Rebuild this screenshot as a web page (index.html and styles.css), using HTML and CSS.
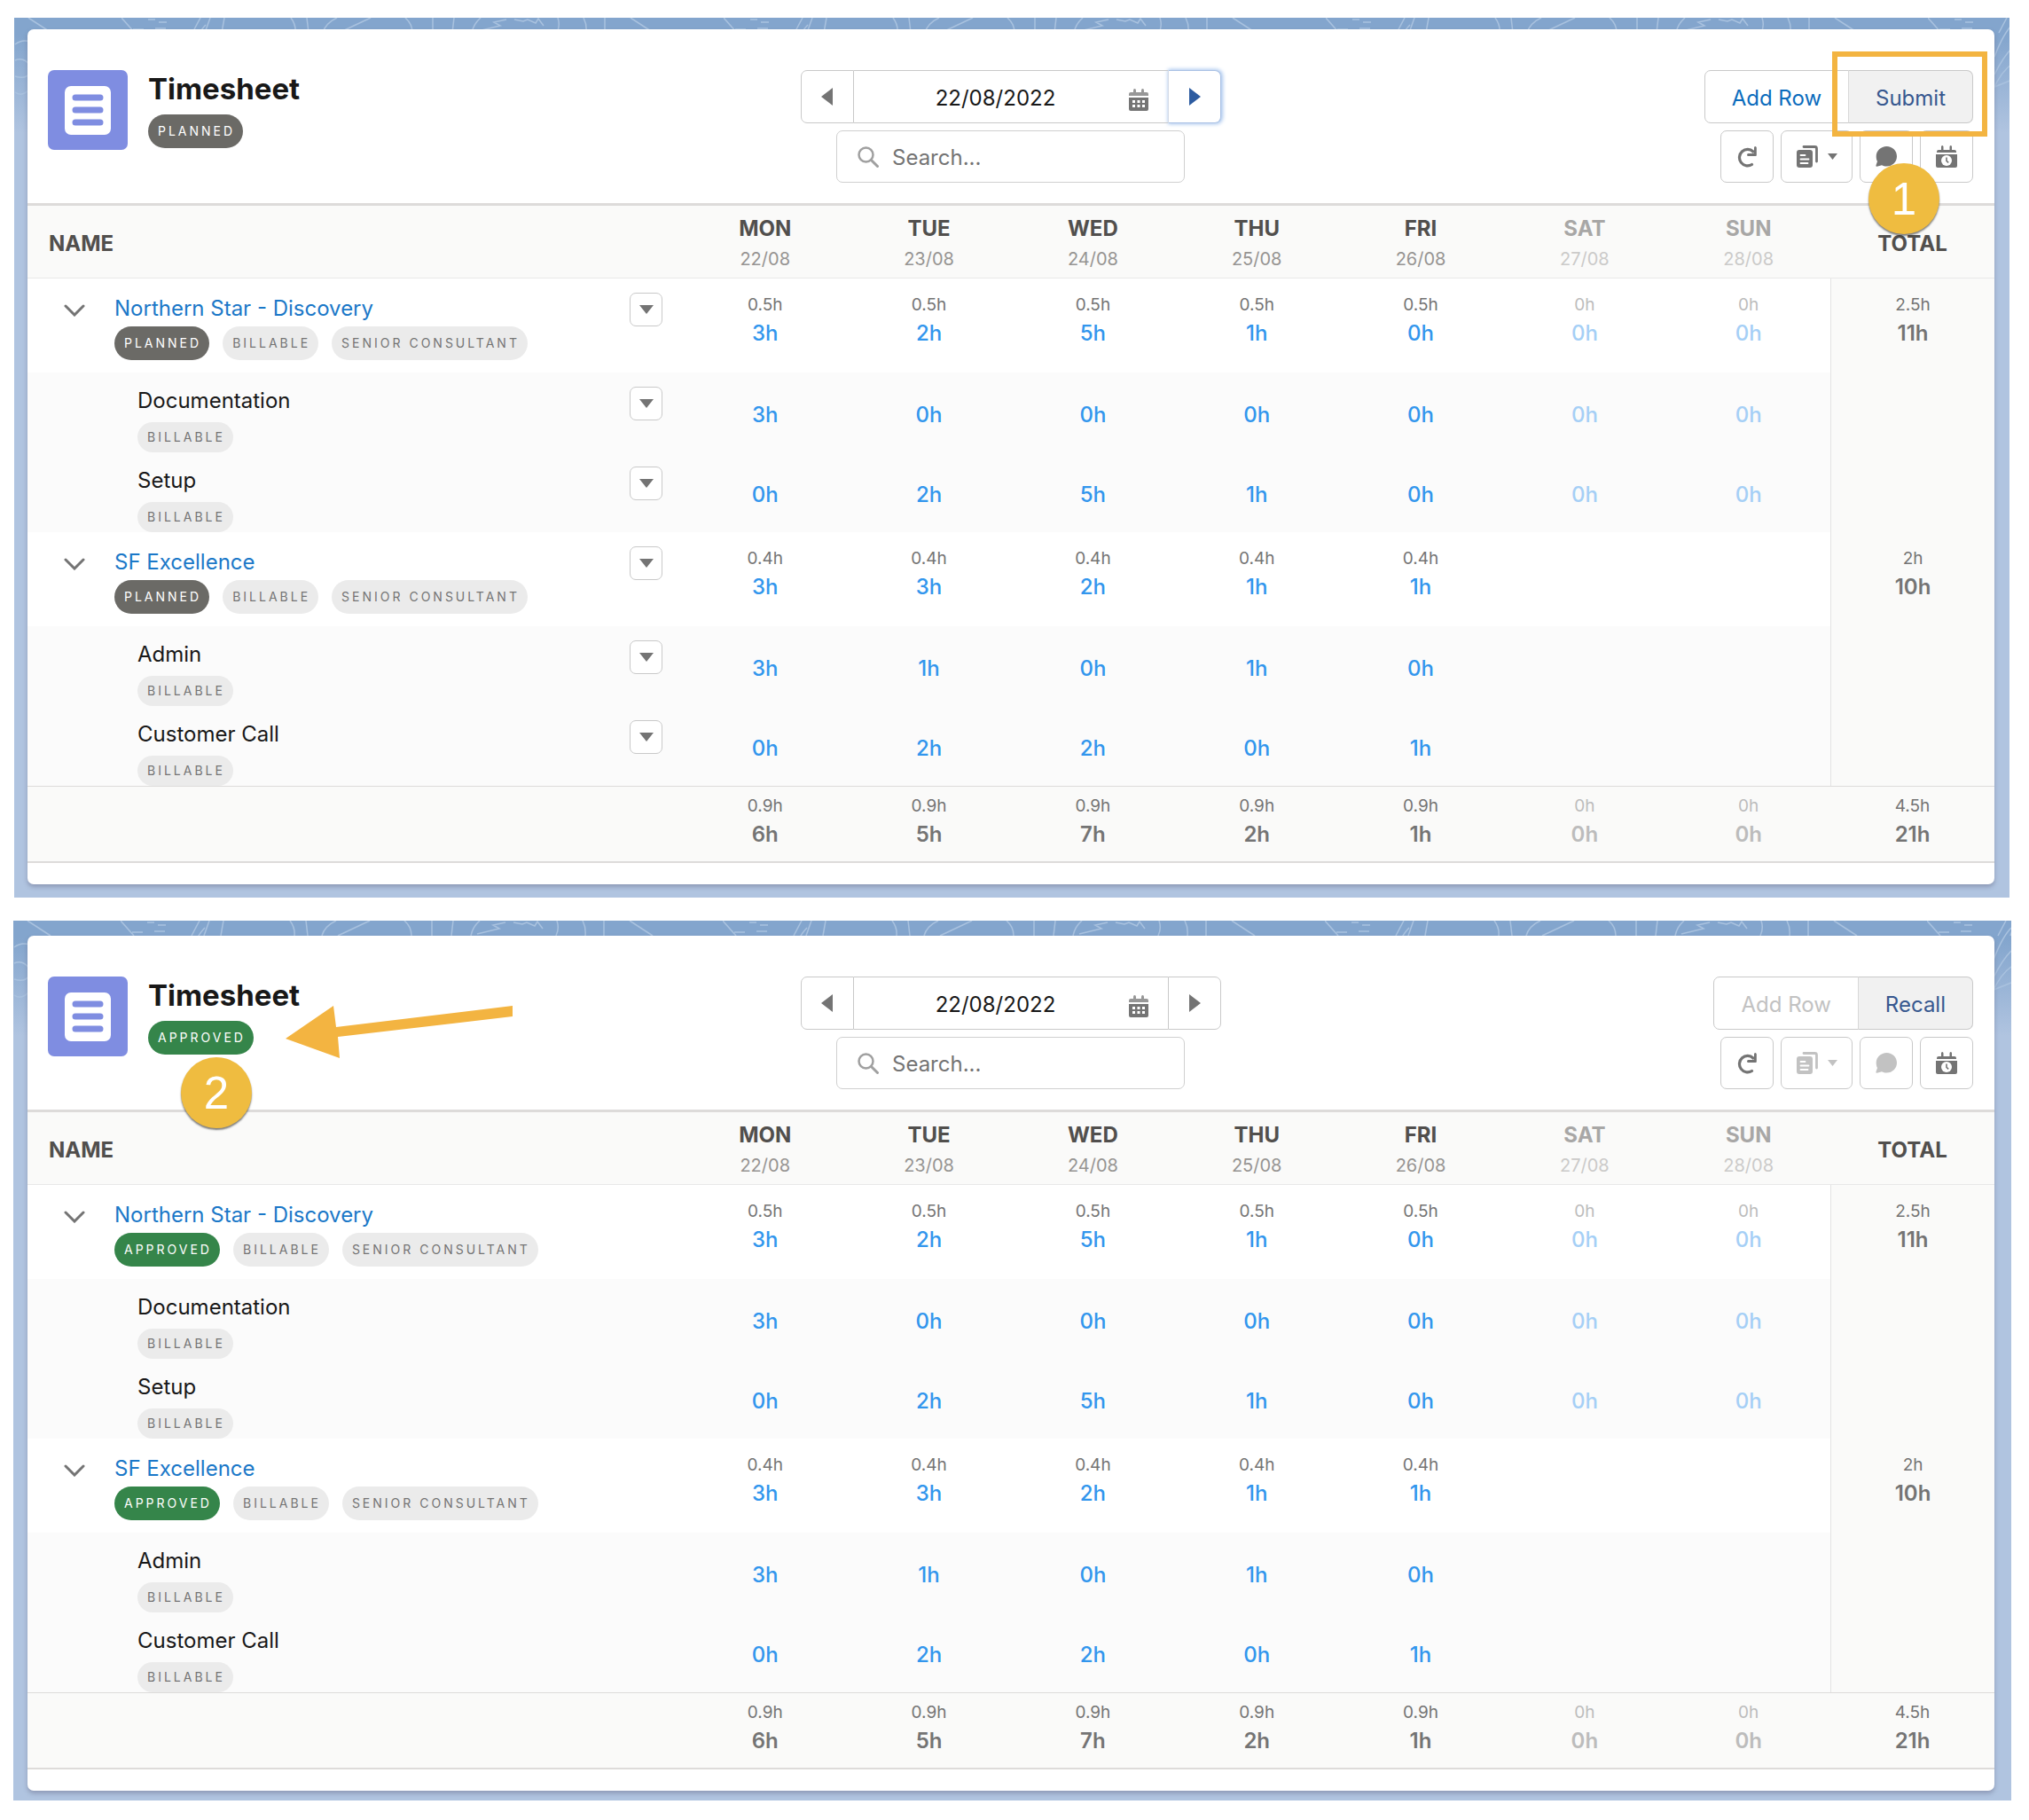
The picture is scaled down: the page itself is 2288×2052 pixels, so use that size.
FILE: index.html
```html
<!DOCTYPE html>
<html lang="en">
<head>
    <meta charset="UTF-8">
    <meta name="viewport" content="width=device-width, initial-scale=1.0">
    <title>Timesheet</title>
    <link rel="stylesheet" href="styles.css">
</head>
<body>

    <!-- shared icons -->
    <svg class="sprite" aria-hidden="true">
        <symbol id="i-sheet" viewBox="0 0 90 90">
            <rect x="19" y="18" width="52" height="55" rx="7" fill="#fff"/>
            <path d="M31 31h28M31 45h28M31 59h28" stroke="#7f8de1" stroke-width="7" stroke-linecap="round"/>
        </symbol>
        <symbol id="i-left" viewBox="0 0 14 20"><path d="M13 0v20L0 10z" fill="currentColor"/></symbol>
        <symbol id="i-right" viewBox="0 0 14 20"><path d="M1 0v20l13-10z" fill="currentColor"/></symbol>
        <symbol id="i-down" viewBox="0 0 16 10"><path d="M0 0h16L8 10z" fill="currentColor"/></symbol>
        <symbol id="i-chevron" viewBox="0 0 24 14"><path d="M2 2l10 10L22 2" fill="none" stroke="currentColor" stroke-width="3" stroke-linecap="round"/></symbol>
        <symbol id="i-calendar" viewBox="0 0 22 25">
            <path d="M0 8V6q0-2 2-2h3V2q0-2 1.500-2T8 2v2h6V2q0-2 1.500-2T17 2v2h3q2 0 2 2v2z" fill="currentColor" opacity=".75"/>
            <path d="M0 10h22v13q0 2-2 2H2q-2 0-2-2z" fill="currentColor"/>
            <path d="M4 13h3v3H4zm5.500 0h3v3h-3zm5.500 0h3v3h-3zM4 18h3v3H4zm5.500 0h3v3h-3zm5.500 0h3v3h-3z" fill="#fff"/>
        </symbol>
        <symbol id="i-search" viewBox="0 0 24 24"><circle cx="9.500" cy="9.500" r="8" fill="none" stroke="currentColor" stroke-width="2.500"/><path d="M15.500 15.500l7 7" stroke="currentColor" stroke-width="3" stroke-linecap="round"/></symbol>
        <symbol id="i-refresh" viewBox="0 0 24 24">
            <path d="M17.500 20.500A9.200 9.200 0 1 1 19 6" fill="none" stroke="currentColor" stroke-width="3.200" stroke-linecap="round"/>
            <path d="M20 1.500q0-1.500 1.300-1.500T22.800 1.500V10q0 1-1 1h-8.300q-1.500 0-1.500-1.500T13.500 8H20z" fill="currentColor"/>
        </symbol>
        <symbol id="i-copy" viewBox="0 0 24 25">
            <path d="M8 1.500h12.500q2 0 2 2V18" fill="none" stroke="currentColor" stroke-width="2.800" stroke-linecap="round"/>
            <rect x="0" y="5" width="18" height="20" rx="3" fill="currentColor"/>
            <path d="M4.500 11h5M4.500 15.500h9M4.500 20h8" stroke="#fff" stroke-width="1.800" stroke-linecap="round"/>
        </symbol>
        <symbol id="i-chat" viewBox="0 0 24 23"><path d="M12.500 0C19 0 24 5 24 11.200S19 22.500 12.500 22.500c-2 0-4-.5-5.500-1.300l-5.500 1.600q-1.500 0-1-1.500L2 17C1 15.200.7 13.300.7 11.200.7 5 6 0 12.500 0z" fill="currentColor"/></symbol>
        <symbol id="i-event" viewBox="0 0 24 25">
            <path d="M1 8V7q0-2 2-2h3V1.500Q6 0 7.200 0T8.500 1.500V5h7V1.500Q15.500 0 16.800 0T18 1.500V5h3q2 0 2 2v1z" fill="currentColor"/>
            <path d="M0 10h24V23q0 2-2 2H2q-2 0-2-2z" fill="currentColor"/>
            <circle cx="12" cy="17" r="6" fill="#fff"/>
            <path d="M12 13.500v3.800l2.200 2" fill="none" stroke="currentColor" stroke-width="1.600"/>
        </symbol>
        <!-- contour lines of the backdrop -->
        <pattern id="contours" x="121" y="0" width="679" height="130" patternUnits="userSpaceOnUse">
            <g fill="none" stroke="#a9c2df" stroke-width="1.500">
                <path d="M0 0l15 17M13 13h12M30 2h8M42 5h9M38 12h12M89 0l-9 17M100 0l-6 17M116 0l-3 17"/>
                <path d="M191 0q6 8 5 17M209 0l2 17M243 0q-13 6-16 17M281 0l-36 17"/>
                <path d="M320 0q8 7 8 17M351 0v17M375 0l-2 17M405 0q-8 7-10 17M434 2l-14 3 7 4-25 6"/>
                <path d="M443 2l10 2 5-2 9 4 3-5 6 8M492 0q3 9-1 17M521 0q4 8 3 17M545 0v17M574 0l26 17"/>
                <path d="M95 8q-10 10-20 36M95 34q-10 10-20 30M95 52q-12 8-22 30M95 70q-10 4-20 8"/>
                <path d="M559 30q8-6 17-3M559 48q10-4 17 6M559 66q12 4 17-4M559 84q8 6 17-4"/>
            </g>
        </pattern>
    </svg>

    <section class="panel planned">
        <svg class="backdrop" aria-hidden="true"><rect y="-4" width="100%" height="130" fill="url(#contours)"/></svg>
        <div class="card">
            <header class="card-header">
                <div class="title">
                    <svg class="title-icon"><use href="#i-sheet"/></svg>
                    <div>
                        <h1>Timesheet</h1>
                        <span class="pill status">Planned</span>
                    </div>
                </div>
                <div class="filters">
                    <div class="date-bar">
                        <button class="step" aria-label="Previous week"><svg width="14" height="20"><use href="#i-left"/></svg></button>
                        <label class="date">
                            <input type="text" value="22/08/2022" aria-label="Week">
                            <svg width="22" height="25"><use href="#i-calendar"/></svg>
                        </label>
                        <button class="step focused" aria-label="Next week"><svg width="14" height="20"><use href="#i-right"/></svg></button>
                    </div>
                    <label class="search">
                        <svg width="24" height="24"><use href="#i-search"/></svg>
                        <input type="search" placeholder="Search..." aria-label="Search">
                    </label>
                </div>
                <div class="actions">
                    <div class="button-group">
                        <button class="btn">Add Row</button>
                        <button class="btn main">Submit</button>
                        <span class="highlight"></span>
                    </div>
                    <div class="tools">
                        <button class="tool" aria-label="Refresh"><svg width="24" height="24"><use href="#i-refresh"/></svg></button>
                        <button class="tool wide" aria-label="Copy"><svg width="24" height="25"><use href="#i-copy"/></svg><svg width="11" height="7"><use href="#i-down"/></svg></button>
                        <button class="tool" aria-label="Comments"><svg width="24" height="23"><use href="#i-chat"/></svg></button>
                        <button class="tool" aria-label="Schedule"><svg width="24" height="25"><use href="#i-event"/></svg></button>
                    </div>
                    <span class="badge badge-one">1</span>
                </div>
            </header>

            <table class="sheet">
                <thead>
                    <tr>
                        <th class="name">Name</th>
                        <th>Mon<span>22/08</span></th><th>Tue<span>23/08</span></th><th>Wed<span>24/08</span></th><th>Thu<span>25/08</span></th><th>Fri<span>26/08</span></th>
                        <th class="off">Sat<span>27/08</span></th><th class="off">Sun<span>28/08</span></th>
                        <th class="total">Total</th>
                    </tr>
                </thead>
                <tbody>
                    <tr class="project">
                        <td class="name"><div class="row-head">
                            <button class="toggle" aria-label="Collapse"><svg width="24" height="14"><use href="#i-chevron"/></svg></button>
                            <div class="label"><a href="#">Northern Star - Discovery</a>
                                <div class="pills"><span class="pill status">Planned</span><span class="pill">Billable</span><span class="pill">Senior Consultant</span></div></div>
                            <button class="menu" aria-label="Row actions"><svg width="16" height="10"><use href="#i-down"/></svg></button>
                        </div></td>
                        <td><small>0.5h</small><a href="#">3h</a></td><td><small>0.5h</small><a href="#">2h</a></td><td><small>0.5h</small><a href="#">5h</a></td><td><small>0.5h</small><a href="#">1h</a></td><td><small>0.5h</small><a href="#">0h</a></td>
                        <td class="off"><small>0h</small><a href="#">0h</a></td><td class="off"><small>0h</small><a href="#">0h</a></td>
                        <td class="total"><small>2.5h</small><b>11h</b></td>
                    </tr>
                    <tr class="task">
                        <td class="name"><div class="row-head">
                            <div class="label">Documentation<div class="pills"><span class="pill">Billable</span></div></div>
                            <button class="menu" aria-label="Row actions"><svg width="16" height="10"><use href="#i-down"/></svg></button>
                        </div></td>
                        <td><a href="#">3h</a></td><td><a href="#">0h</a></td><td><a href="#">0h</a></td><td><a href="#">0h</a></td><td><a href="#">0h</a></td>
                        <td class="off"><a href="#">0h</a></td><td class="off"><a href="#">0h</a></td>
                        <td class="total"></td>
                    </tr>
                    <tr class="task">
                        <td class="name"><div class="row-head">
                            <div class="label">Setup<div class="pills"><span class="pill">Billable</span></div></div>
                            <button class="menu" aria-label="Row actions"><svg width="16" height="10"><use href="#i-down"/></svg></button>
                        </div></td>
                        <td><a href="#">0h</a></td><td><a href="#">2h</a></td><td><a href="#">5h</a></td><td><a href="#">1h</a></td><td><a href="#">0h</a></td>
                        <td class="off"><a href="#">0h</a></td><td class="off"><a href="#">0h</a></td>
                        <td class="total"></td>
                    </tr>
                    <tr class="project">
                        <td class="name"><div class="row-head">
                            <button class="toggle" aria-label="Collapse"><svg width="24" height="14"><use href="#i-chevron"/></svg></button>
                            <div class="label"><a href="#">SF Excellence</a>
                                <div class="pills"><span class="pill status">Planned</span><span class="pill">Billable</span><span class="pill">Senior Consultant</span></div></div>
                            <button class="menu" aria-label="Row actions"><svg width="16" height="10"><use href="#i-down"/></svg></button>
                        </div></td>
                        <td><small>0.4h</small><a href="#">3h</a></td><td><small>0.4h</small><a href="#">3h</a></td><td><small>0.4h</small><a href="#">2h</a></td><td><small>0.4h</small><a href="#">1h</a></td><td><small>0.4h</small><a href="#">1h</a></td>
                        <td></td><td></td>
                        <td class="total"><small>2h</small><b>10h</b></td>
                    </tr>
                    <tr class="task">
                        <td class="name"><div class="row-head">
                            <div class="label">Admin<div class="pills"><span class="pill">Billable</span></div></div>
                            <button class="menu" aria-label="Row actions"><svg width="16" height="10"><use href="#i-down"/></svg></button>
                        </div></td>
                        <td><a href="#">3h</a></td><td><a href="#">1h</a></td><td><a href="#">0h</a></td><td><a href="#">1h</a></td><td><a href="#">0h</a></td>
                        <td></td><td></td>
                        <td class="total"></td>
                    </tr>
                    <tr class="task">
                        <td class="name"><div class="row-head">
                            <div class="label">Customer Call<div class="pills"><span class="pill">Billable</span></div></div>
                            <button class="menu" aria-label="Row actions"><svg width="16" height="10"><use href="#i-down"/></svg></button>
                        </div></td>
                        <td><a href="#">0h</a></td><td><a href="#">2h</a></td><td><a href="#">2h</a></td><td><a href="#">0h</a></td><td><a href="#">1h</a></td>
                        <td></td><td></td>
                        <td class="total"></td>
                    </tr>
                </tbody>
                <tfoot>
                    <tr>
                        <td class="name"></td>
                        <td><small>0.9h</small><b>6h</b></td><td><small>0.9h</small><b>5h</b></td><td><small>0.9h</small><b>7h</b></td><td><small>0.9h</small><b>2h</b></td><td><small>0.9h</small><b>1h</b></td>
                        <td class="off"><small>0h</small><b>0h</b></td><td class="off"><small>0h</small><b>0h</b></td>
                        <td><small>4.5h</small><b>21h</b></td>
                    </tr>
                </tfoot>
            </table>
        </div>
    </section>

    <section class="panel approved">
        <svg class="backdrop" aria-hidden="true"><rect width="100%" height="130" fill="url(#contours)"/></svg>
        <div class="card">
            <header class="card-header">
                <div class="title">
                    <svg class="title-icon"><use href="#i-sheet"/></svg>
                    <div>
                        <h1>Timesheet</h1>
                        <span class="pill status">Approved</span>
                    </div>
                    <svg class="arrow" width="260" height="64" aria-hidden="true"><path d="M0 39L54 2l3 24L256 2v12L59 37l2 24z" fill="#f3b441"/></svg>
                    <span class="badge badge-two">2</span>
                </div>
                <div class="filters">
                    <div class="date-bar">
                        <button class="step" aria-label="Previous week"><svg width="14" height="20"><use href="#i-left"/></svg></button>
                        <label class="date">
                            <input type="text" value="22/08/2022" aria-label="Week">
                            <svg width="22" height="25"><use href="#i-calendar"/></svg>
                        </label>
                        <button class="step" aria-label="Next week"><svg width="14" height="20"><use href="#i-right"/></svg></button>
                    </div>
                    <label class="search">
                        <svg width="24" height="24"><use href="#i-search"/></svg>
                        <input type="search" placeholder="Search..." aria-label="Search">
                    </label>
                </div>
                <div class="actions">
                    <div class="button-group">
                        <button class="btn" disabled>Add Row</button>
                        <button class="btn main">Recall</button>
                    </div>
                    <div class="tools">
                        <button class="tool" aria-label="Refresh"><svg width="24" height="24"><use href="#i-refresh"/></svg></button>
                        <button class="tool wide" aria-label="Copy" disabled><svg width="24" height="25"><use href="#i-copy"/></svg><svg width="11" height="7"><use href="#i-down"/></svg></button>
                        <button class="tool" aria-label="Comments" disabled><svg width="24" height="23"><use href="#i-chat"/></svg></button>
                        <button class="tool" aria-label="Schedule"><svg width="24" height="25"><use href="#i-event"/></svg></button>
                    </div>
                </div>
            </header>

            <table class="sheet">
                <thead>
                    <tr>
                        <th class="name">Name</th>
                        <th>Mon<span>22/08</span></th><th>Tue<span>23/08</span></th><th>Wed<span>24/08</span></th><th>Thu<span>25/08</span></th><th>Fri<span>26/08</span></th>
                        <th class="off">Sat<span>27/08</span></th><th class="off">Sun<span>28/08</span></th>
                        <th class="total">Total</th>
                    </tr>
                </thead>
                <tbody>
                    <tr class="project">
                        <td class="name"><div class="row-head">
                            <button class="toggle" aria-label="Collapse"><svg width="24" height="14"><use href="#i-chevron"/></svg></button>
                            <div class="label"><a href="#">Northern Star - Discovery</a>
                                <div class="pills"><span class="pill status">Approved</span><span class="pill">Billable</span><span class="pill">Senior Consultant</span></div></div>
                        </div></td>
                        <td><small>0.5h</small><a href="#">3h</a></td><td><small>0.5h</small><a href="#">2h</a></td><td><small>0.5h</small><a href="#">5h</a></td><td><small>0.5h</small><a href="#">1h</a></td><td><small>0.5h</small><a href="#">0h</a></td>
                        <td class="off"><small>0h</small><a href="#">0h</a></td><td class="off"><small>0h</small><a href="#">0h</a></td>
                        <td class="total"><small>2.5h</small><b>11h</b></td>
                    </tr>
                    <tr class="task">
                        <td class="name"><div class="row-head"><div class="label">Documentation<div class="pills"><span class="pill">Billable</span></div></div></div></td>
                        <td><a href="#">3h</a></td><td><a href="#">0h</a></td><td><a href="#">0h</a></td><td><a href="#">0h</a></td><td><a href="#">0h</a></td>
                        <td class="off"><a href="#">0h</a></td><td class="off"><a href="#">0h</a></td>
                        <td class="total"></td>
                    </tr>
                    <tr class="task">
                        <td class="name"><div class="row-head"><div class="label">Setup<div class="pills"><span class="pill">Billable</span></div></div></div></td>
                        <td><a href="#">0h</a></td><td><a href="#">2h</a></td><td><a href="#">5h</a></td><td><a href="#">1h</a></td><td><a href="#">0h</a></td>
                        <td class="off"><a href="#">0h</a></td><td class="off"><a href="#">0h</a></td>
                        <td class="total"></td>
                    </tr>
                    <tr class="project">
                        <td class="name"><div class="row-head">
                            <button class="toggle" aria-label="Collapse"><svg width="24" height="14"><use href="#i-chevron"/></svg></button>
                            <div class="label"><a href="#">SF Excellence</a>
                                <div class="pills"><span class="pill status">Approved</span><span class="pill">Billable</span><span class="pill">Senior Consultant</span></div></div>
                        </div></td>
                        <td><small>0.4h</small><a href="#">3h</a></td><td><small>0.4h</small><a href="#">3h</a></td><td><small>0.4h</small><a href="#">2h</a></td><td><small>0.4h</small><a href="#">1h</a></td><td><small>0.4h</small><a href="#">1h</a></td>
                        <td></td><td></td>
                        <td class="total"><small>2h</small><b>10h</b></td>
                    </tr>
                    <tr class="task">
                        <td class="name"><div class="row-head"><div class="label">Admin<div class="pills"><span class="pill">Billable</span></div></div></div></td>
                        <td><a href="#">3h</a></td><td><a href="#">1h</a></td><td><a href="#">0h</a></td><td><a href="#">1h</a></td><td><a href="#">0h</a></td>
                        <td></td><td></td>
                        <td class="total"></td>
                    </tr>
                    <tr class="task">
                        <td class="name"><div class="row-head"><div class="label">Customer Call<div class="pills"><span class="pill">Billable</span></div></div></div></td>
                        <td><a href="#">0h</a></td><td><a href="#">2h</a></td><td><a href="#">2h</a></td><td><a href="#">0h</a></td><td><a href="#">1h</a></td>
                        <td></td><td></td>
                        <td class="total"></td>
                    </tr>
                </tbody>
                <tfoot>
                    <tr>
                        <td class="name"></td>
                        <td><small>0.9h</small><b>6h</b></td><td><small>0.9h</small><b>5h</b></td><td><small>0.9h</small><b>7h</b></td><td><small>0.9h</small><b>2h</b></td><td><small>0.9h</small><b>1h</b></td>
                        <td class="off"><small>0h</small><b>0h</b></td><td class="off"><small>0h</small><b>0h</b></td>
                        <td><small>4.5h</small><b>21h</b></td>
                    </tr>
                </tfoot>
            </table>
        </div>
    </section>

</body>
</html>
```
FILE: styles.css
```css
* {
    box-sizing: border-box;
}

body {
    display: flow-root;
    margin: 0;
    background-color: #fff;
    font-family: Inter, "Liberation Sans", sans-serif;
    font-size: 24px;
    color: #181818;
}

a {
    color: #1b78c8;
    text-decoration: none;
}

button,
input {
    font: inherit;
    color: inherit;
}

button {
    display: flex;
    align-items: center;
    justify-content: center;
    margin: 0;
    padding: 0;
    background-color: #fff;
    border: 1px solid #c9c9c9;
    color: #747474;
}

.sprite {
    position: absolute;
    width: 0;
    height: 0;
}

/* panels */

.panel {
    position: relative;
    background: #b0c4e0 linear-gradient(#83a5cd, #83a5cd 20px, #b0c4e0 130px) no-repeat;
}

.panel.planned {
    margin: 20px 22px 26px 16px;
    padding: 13px 17px 15px 15px;
}

.panel.approved {
    margin: 0 20px 20px 15px;
    padding: 17px 19px 11px 16px;
}

.backdrop {
    position: absolute;
    top: 0;
    left: 0;
    width: 100%;
    height: 130px;
}

.card {
    position: relative;
    padding-bottom: 24px;
    background-color: #fff;
    border-radius: 7px;
    box-shadow: 0 3px 5px rgba(90, 90, 120, 0.4);
}

/* header */

.card-header {
    display: grid;
    grid-template-columns: 1fr auto 1fr;
    align-items: start;
    padding: 46px 24px 23px 23px;
}

.title {
    position: relative;
    display: flex;
    gap: 23px;
}

.title-icon {
    width: 90px;
    height: 90px;
    background-color: #7f8de1;
    border-radius: 7px;
}

h1 {
    margin: 0 0 8px;
    font-size: 33px;
    line-height: 42px;
    font-weight: 700;
}

.filters,
.actions {
    display: flex;
    flex-direction: column;
    gap: 8px;
}

.filters {
    align-items: center;
}

.actions {
    position: relative;
    align-items: flex-end;
}

.date-bar {
    display: flex;
    width: 474px;
    height: 60px;
}

.step {
    width: 60px;
    border-radius: 7px 0 0 7px;
}

.step:last-child {
    border-radius: 0 7px 7px 0;
}

.step.focused {
    color: #2c5ba0;
    border-color: #a9c1e4;
    border-left-color: #d4dbe6;
    box-shadow: 1px 0 4px 1px #a9c6ee;
}

.date {
    position: relative;
    display: flex;
    flex: 1;
    align-items: center;
    border: solid #c9c9c9;
    border-width: 1px 0;
    color: #747474;
}

.date input {
    width: 100%;
    padding: 2px 42px 0 8px;
    border: 0;
    background: none;
    text-align: center;
    color: #181818;
}

.date svg {
    position: absolute;
    right: 22px;
    top: 20px;
}

.search {
    display: flex;
    align-items: center;
    gap: 15px;
    width: 393px;
    height: 59px;
    padding: 0 23px;
    border: 1px solid #d0d0d0;
    border-radius: 7px;
    color: #a0a0a0;
}

.search input {
    flex: 1;
    min-width: 0;
    padding: 2px 0 0;
    border: 0;
    background: none;
}

.search input::placeholder {
    color: #747474;
}

.button-group {
    position: relative;
    display: flex;
    height: 60px;
}

.btn {
    padding: 2px 30px 0;
    border-radius: 7px 0 0 7px;
    color: #0b6cbd;
}

.btn.main {
    margin-left: -1px;
    border-left-color: #d8d8d8;
    border-radius: 0 7px 7px 0;
    background-color: #f1f1f1;
    color: #37588f;
}

.btn:disabled,
.tool:disabled {
    color: #c2c2c2;
}

.tools {
    display: flex;
    gap: 8px;
}

.tool {
    width: 60px;
    height: 59px;
    gap: 11px;
    border-radius: 7px;
}

.tool.wide {
    width: 81px;
}

/* callouts */

.highlight {
    position: absolute;
    top: -21px;
    right: -16px;
    width: 175px;
    height: 96px;
    border: 6px solid #f3b441;
    z-index: 1;
}

.badge {
    position: absolute;
    width: 80px;
    height: 80px;
    border-radius: 50%;
    background-color: #efbc40;
    box-shadow: 0 2px 2px rgba(0, 0, 0, 0.5);
    font-family: "Liberation Sans", sans-serif;
    font-size: 51px;
    line-height: 82px;
    text-align: center;
    color: #fff;
    z-index: 1;
}

.badge-one {
    top: 105px;
    right: 38px;
}

.badge-two {
    top: 91px;
    left: 150px;
}

.arrow {
    position: absolute;
    top: 31px;
    left: 268px;
}

/* pills */

.pills {
    display: flex;
    gap: 15px;
}

.pill {
    display: block;
    width: max-content;
    height: 38px;
    padding: 0 9px 0 11px;
    border-radius: 19px;
    background-color: #ebebeb;
    font-size: 14px;
    line-height: 38px;
    letter-spacing: 3px;
    text-transform: uppercase;
    white-space: nowrap;
    color: #747474;
}

.pill.status {
    background-color: #6b6a66;
    color: #fff;
}

.approved .pill.status {
    background-color: #35854a;
}

/* table */

.sheet {
    width: 100%;
    border-collapse: separate;
    border-spacing: 0;
    table-layout: fixed;
    border-top: 3px solid #dddbda;
    border-bottom: 2px solid #dddbda;
}

.sheet th {
    padding: 9px 0 4px;
    background-color: #fafaf9;
    border-bottom: 1px solid #e8e8e8;
    line-height: 34px;
    font-weight: 700;
    text-transform: uppercase;
    color: #514f4d;
}

.sheet th span {
    display: block;
    font-size: 20px;
    font-weight: 400;
    color: #969492;
}

.sheet th.off {
    color: #a8a7a6;
}

.sheet th.off span {
    color: #cbcac9;
}

.sheet .name {
    width: 33.333%;
    text-align: left;
}

.sheet th.name {
    padding-left: 24px;
}

.sheet td {
    padding: 0;
    vertical-align: top;
    text-align: center;
    line-height: 36px;
    color: #747474;
}

.sheet td:not(.name) a {
    font-weight: 500;
    color: #3296ed;
}

.sheet td.off,
.sheet tfoot td.off {
    color: #bcbcbc;
}

.sheet td.off a {
    color: #a5cff6;
}

.sheet small {
    display: block;
    font-size: 19px;
    line-height: 28px;
}

.sheet b {
    font-weight: 600;
}

.project td {
    padding-top: 16px;
}

.project td.name {
    padding-top: 0;
}

.task td {
    padding-top: 30px;
    background-color: #fbfbfb;
}

.task td.name {
    padding-top: 0;
    color: #181818;
}

.sheet td.total {
    background-color: #fafaf9;
    border-left: 1px solid #e3e3e3;
}

.sheet tfoot td {
    height: 85px;
    padding-top: 8px;
    background-color: #fafaf9;
    border-top: 1px solid #dddbda;
}

.row-head {
    display: flex;
    align-items: flex-start;
    padding: 16px 23px 0 41px;
}

.label {
    flex: 1;
    line-height: 28px;
}

.project .label {
    padding: 4px 0 14px;
}

.project .pills {
    margin-top: 6px;
}

.task .row-head {
    padding-left: 124px;
}

.task .label {
    padding-top: 2px;
}

.task .pills {
    margin-top: 10px;
}

.task .pill {
    height: 34px;
    line-height: 34px;
}

.toggle {
    width: 24px;
    height: 40px;
    margin-right: 33px;
    border: 0;
    background: none;
}

.menu {
    width: 37px;
    height: 38px;
    border-radius: 7px;
}
```
